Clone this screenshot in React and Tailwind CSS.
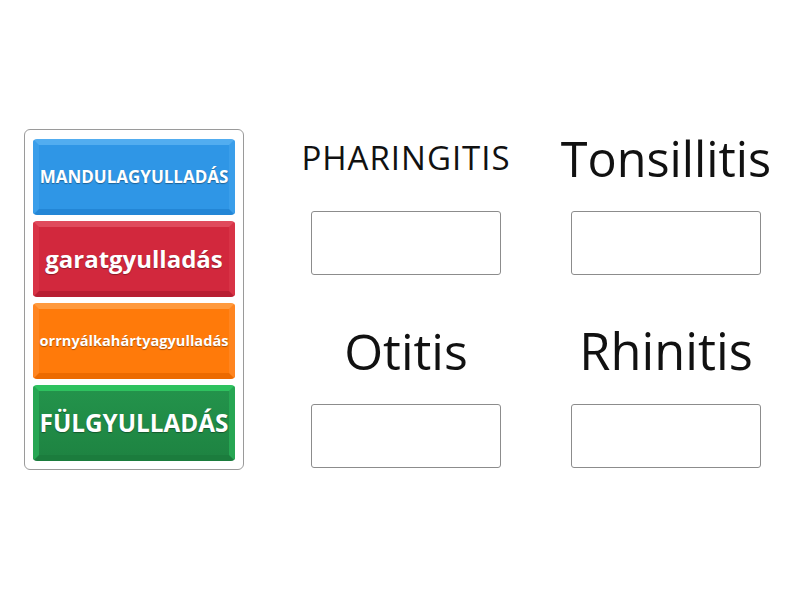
export default function App() {
  const tiles = [
    { text: "MANDULAGYULLADÁS", size: "text-[17px]", c: "bg-[#2f96e6] border-t-[#52adf0] border-l-[#3a9eea] border-r-[#3a9eea] border-b-[#2386d6]" },
    { text: "garatgyulladás", size: "text-[24px]", c: "bg-[#d2283d] border-t-[#e04a5c] border-l-[#d83346] border-r-[#d83346] border-b-[#b81e32]" },
    { text: "orrnyálkahártyagyulladás", size: "text-[14.6px]", c: "bg-[#ff7a0a] border-t-[#ff9a3e] border-l-[#ff8520] border-r-[#ff8520] border-b-[#ec6a00]" },
    { text: "FÜLGYULLADÁS", size: "text-[24.3px]", c: "bg-[linear-gradient(#23934b,#1e8442)] border-t-[#2ec25f] border-l-[#27a653] border-r-[#27a653] border-b-[#1b7c3d]" },
  ];
  const cells = [
    { t: "PHARINGITIS", s: "text-[33px] tracking-[1px]" },
    { t: "Tonsillitis", s: "text-[48.5px]" },
    { t: "Otitis", s: "text-[50px]" },
    { t: "Rhinitis", s: "text-[50.5px]" },
  ];
  return (
    <div className="w-[800px] h-[600px] bg-white flex font-['Open_Sans',sans-serif]">
      <div className="ml-[24px] mt-[129px] w-[220px] h-[341px] border border-[#9a9a9a] rounded-[6px] pt-[9px] px-[8px] flex flex-col gap-[6px]">
        {tiles.map((t) => (
          <div
            key={t.text}
            className={`h-[76px] w-full rounded-[4px] border-[6px] flex items-center justify-center text-white font-bold ${t.size} ${t.c} [text-shadow:0_1px_1px_rgba(0,0,0,0.35)] whitespace-nowrap`}
          >
            {t.text}
          </div>
        ))}
      </div>
      <div className="ml-[32px] mt-[126px] grid grid-cols-[260px_260px] gap-y-[44px] h-fit">
        {cells.map((c) => (
          <div key={c.t} className="flex flex-col items-center">
            <div className={`h-[64px] flex items-center text-[#111] whitespace-nowrap ${c.s}`}>{c.t}</div>
            <div className="mt-[21px] w-[190px] h-[64px] border border-[#8c8c8c] rounded-[3px] bg-white" />
          </div>
        ))}
      </div>
    </div>
  );
}
